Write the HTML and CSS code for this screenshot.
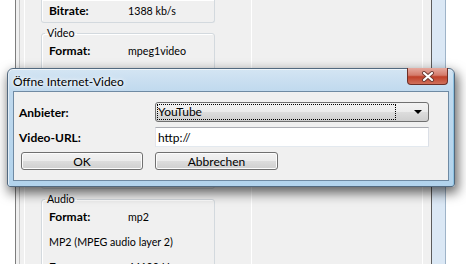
FILE: index.html
```html
<!DOCTYPE html>
<html lang="de">
<head>
  <meta charset="UTF-8">
  <title>Öffne Internet-Video</title>
  <link rel="stylesheet" href="styles.css">
</head>
<body>
  <div class="win">
    <div class="pane">
      <div class="list">
        <fieldset class="group cut">
          <div class="row"><b>Bitrate:</b><span>1388 kb/s</span></div>
        </fieldset>
        <fieldset class="group video">
          <legend>Video</legend>
          <div class="row first"><b>Format:</b><span>mpeg1video</span></div>
        </fieldset>
        <fieldset class="group">
          <legend>Audio</legend>
          <div class="row first"><b>Format:</b><span>mp2</span></div>
          <div class="row">MP2 (MPEG audio layer 2)</div>
          <div class="row"><b>Frequenz:</b><span>44100 Hz</span></div>
        </fieldset>
      </div>
      <div class="rest"></div>
    </div>
    <div class="edge"></div>
  </div>

  <div class="dialog">
    <div class="titlebar">
      <span class="title">Öffne Internet-Video</span>
      <span class="close">
        <svg width="14" height="11" viewBox="0 0 14 11">
          <path d="M3 2 L11 9 M11 2 L3 9" stroke="#6b3a33" stroke-width="4" stroke-linecap="round"/>
          <path d="M3 2 L11 9 M11 2 L3 9" stroke="#fff" stroke-width="2.2" stroke-linecap="round"/>
        </svg>
      </span>
    </div>
    <form class="client" onsubmit="return false">
      <label>Anbieter:</label>
      <div class="combo"><span class="combo-text">YouTube</span><span class="arrow"></span></div>
      <label>Video-URL:</label>
      <input type="text" value="http://">
      <button class="btn ok">OK</button>
      <button class="btn">Abbrechen</button>
    </form>
  </div>
</body>
</html>
```

FILE: styles.css
```css
body {
  margin: 0;
  height: 264px;
  overflow: hidden;
  background: #fff;
  font-family: Lato, "Liberation Sans", sans-serif;
  font-size: 12px;
  color: #000;
  position: relative;
}

/* background window */
.win {
  margin-left: 15px;
  width: 430px;
  height: 264px;
  display: flex;
  border-left: 1px solid #7d7d7d;
  background: #f0f0f0;
  font-size: 10.7px;
}
.pane {
  flex: 1;
  display: flex;
  margin-left: 3px;
  border-left: 1px solid #c3c3c3;
  padding-left: 4px;
  border-right: 1px solid #fff;
}
.list {
  width: 210px;
  border-left: 1px solid #fff;
  border-right: 1px solid #fff;
  padding-left: 16px;
}
.rest { flex: 1; }
.edge {
  width: 15px;
  border-left: 8px solid #f0f0f0;
  background: #dbe8f5;
  box-shadow: inset 1px 0 #5c5c5c, inset -1px 0 #9fb4c8;
}

.group {
  width: 165px;
  margin: 3px 0 0;
  padding: 0 0 0 7px;
  border: 1px solid #d3d9de;
  border-radius: 3px;
  box-shadow: inset 1px 1px #fff;
}
.group.cut {
  margin-top: 0;
  border-top: none;
  border-radius: 0 0 3px 3px;
}
.group.cut .row { height: 22px; line-height: 22px; }
.group.video { padding-bottom: 125px; }
.group legend {
  margin-left: -4px;
  padding: 0 2px;
  line-height: 14px;
}
.row {
  height: 25px;
  line-height: 25px;
  display: flex;
  white-space: nowrap;
}
.row.first { margin-top: -2px; }
.row b { width: 79px; font-size: 12px; }

/* dialog */
.dialog {
  position: absolute;
  left: 7px;
  top: 68px;
  width: 448px;
  box-sizing: border-box;
  padding: 0 5px 5px;
  border: 1px solid #52697f;
  border-radius: 6px 6px 3px 3px;
  background: linear-gradient(#d4e5f3, #c0d9ee 22px, #b2d3ec);
  box-shadow: 2px 5px 12px 1px rgba(0, 0, 0, 0.6), inset 0 1px #eef5fb, inset 1px 0 #e4eef7, inset -1px 0 #8ec3e2;
}
.titlebar {
  height: 22px;
  display: flex;
  justify-content: space-between;
  align-items: flex-start;
}
.title {
  line-height: 25px;
  text-shadow: 0 0 6px #fff, 0 0 3px #fff;
}
.close {
  width: 41px;
  height: 17px;
  margin: -1px 1px 0 0;
  box-sizing: border-box;
  display: flex;
  align-items: center;
  justify-content: center;
  border: 1px solid #6d2f27;
  border-top: none;
  border-radius: 0 0 4px 4px;
  background: linear-gradient(#e5aa9f, #d47b6b 45%, #bf4029 55%, #d0705b);
}
.client {
  margin: 0;
  display: grid;
  grid-template-columns: 136px 274px;
  grid-template-rows: 20px 20px 18px;
  row-gap: 5px;
  align-items: center;
  padding: 10px 19px 10px 5px;
  border: 1px solid #6f8aa3;
  background: #f0f0f0;
}
.client label { font-weight: bold; }
.combo {
  height: 20px;
  box-sizing: border-box;
  display: flex;
  align-items: center;
  border: 1px solid #707070;
  border-radius: 3px;
  background: linear-gradient(#f2f2f2, #ebebeb 50%, #dddddd 50%, #cfcfcf);
}
.combo-text {
  flex: 1;
  margin: 0 18px 0 1px;
  height: 16px;
  line-height: 16px;
  padding-left: 1px;
  outline: 1px dotted #000;
  outline-offset: -1px;
}
.arrow {
  width: 0;
  height: 0;
  margin-right: 6px;
  border-left: 4px solid transparent;
  border-right: 4px solid transparent;
  border-top: 4px solid #000;
}
.client input {
  height: 20px;
  box-sizing: border-box;
  margin: 0;
  padding: 0 2px;
  font: inherit;
  border: 1px solid;
  border-color: #abadb3 #dbdfe6 #e3e9ef #e2e3ea;
  background: #fff;
}
.btn {
  height: 18px;
  width: 123px;
  margin: 0;
  padding: 0;
  font: inherit;
  color: #000;
  justify-self: start;
  border: 1px solid #707070;
  border-radius: 3px;
  background: linear-gradient(#f2f2f2, #ebebeb 50%, #dddddd 50%, #cfcfcf);
  box-shadow: inset 0 0 0 1px #fcfcfc;
}
.btn.ok { margin-left: 2px; width: 122px; }
```
